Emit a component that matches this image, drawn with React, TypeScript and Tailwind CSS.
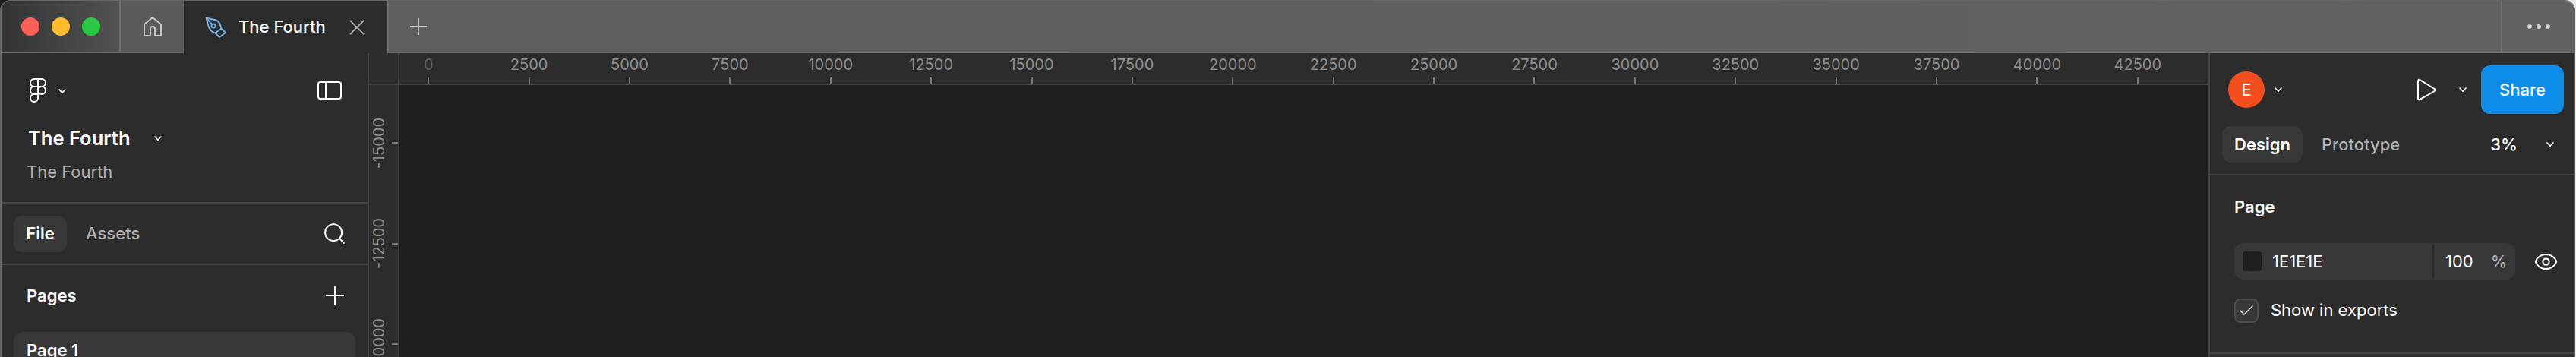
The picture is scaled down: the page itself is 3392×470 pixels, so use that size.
import { Eye, Check, Search } from "lucide-react";

const FONT = "font-['Inter','Liberation_Sans',sans-serif]";

const hLabels = [
  "0", "2500", "5000", "7500", "10000", "12500", "15000", "17500", "20000",
  "22500", "25000", "27500", "30000", "32500", "35000", "37500", "40000", "42500",
];
const vLabels = ["-15000", "-12500", "-10000"];

const Chevron = ({ className = "" }: { className?: string }) => (
  <svg width="12" height="8" viewBox="0 0 12 8" fill="none" className={className}>
    <path d="M1.5 1.5 6 6l4.5-4.5" stroke="white" strokeWidth="1.6" />
  </svg>
);

const Cross = ({ size, color, rotate = false }: { size: number; color: string; rotate?: boolean }) => (
  <svg width={size} height={size} viewBox="0 0 24 24" fill="none" stroke={color} strokeWidth="2">
    {rotate ? <path d="M1 1l22 22M23 1 1 23" /> : <path d="M12 0v24M0 12h24" />}
  </svg>
);

const FigmaLogo = () => (
  <svg width="22" height="32" viewBox="0 0 22 32" fill="none" stroke="white" strokeWidth="2">
    <path d="M11 1H6a5 5 0 0 0 0 10h5V1Z" />
    <path d="M11 1h5a5 5 0 0 1 0 10h-5V1Z" />
    <path d="M11 11H6a5 5 0 0 0 0 10h5V11Z" />
    <circle cx="16" cy="16" r="5" />
    <path d="M11 21H6a5 5 0 1 0 5 5v-5Z" />
  </svg>
);

const PenTool = () => (
  <svg width="28" height="28" viewBox="0 0 28 28" fill="none" stroke="#6eb1e0" strokeWidth="2" strokeLinejoin="round">
    <path d="M1.5 1.5 14.5 4.5Q19.5 6.5 21.5 15.5L13.5 21.5Q6.5 19.5 4.5 12.5Z" />
    <path d="M1.5 1.5 9 10" />
    <circle cx="11" cy="12" r="2.5" />
    <path d="M21.5 15.5 27 21 19 27 13.5 21.5" />
  </svg>
);

const HomeIcon = () => (
  <svg width="24" height="26" viewBox="0 0 24 26" fill="none" stroke="#c8c8c8" strokeWidth="2" strokeLinejoin="round">
    <path d="M1 25V10L12 1l11 9v15h-8v-9a3 3 0 0 0-6 0v9Z" />
  </svg>
);

const HorizontalRuler = () => (
  <div className="flex h-[40px] flex-1 overflow-hidden">
    <div className="ml-[-28px] flex">
      {hLabels.map((label, index) => (
        <div key={label} className="flex w-[132.4px] shrink-0 flex-col items-center">
          <span
            className={`mt-[1px] text-[20px] leading-[28px] ${index === 0 ? "text-[#5f5f5f]" : "text-[#8c8c8c]"}`}
          >
            {label}
          </span>
          <span className="mt-[3px] h-[8px] w-[2px] bg-[#777777]" />
        </div>
      ))}
    </div>
  </div>
);

const VerticalRuler = () => (
  <div className="h-full w-[40px] shrink-0 overflow-hidden border-r-2 border-[#444444] bg-[#2c2c2c] pt-[10px]">
    {vLabels.map((label) => (
      <div key={label} className="flex h-[132.5px] items-center justify-end">
        <span className="rotate-180 text-[20px] leading-[24px] text-[#8c8c8c] [writing-mode:vertical-rl]">
          {label}
        </span>
        <span className="ml-[5px] h-[2px] w-[8px] bg-[#777777]" />
      </div>
    ))}
  </div>
);

const LeftPanel = () => (
  <aside className="flex w-[484px] shrink-0 flex-col border-r-2 border-[#444444] bg-[#2c2c2c]">
    <div className="flex h-[198px] shrink-0 flex-col border-b-2 border-[#444444]">
      <div className="flex items-center justify-between pl-[37px] pr-[34px] pt-[33px]">
        <div className="flex items-center gap-[15px]">
          <FigmaLogo />
          <Chevron className="mt-[2px]" />
        </div>
        <svg width="32" height="24" viewBox="0 0 32 24" fill="none" stroke="white" strokeWidth="2">
          <rect x="1" y="1" width="30" height="22" rx="3" />
          <path d="M11 1v22" />
        </svg>
      </div>
      <div className="ml-[35px] mt-[31px] flex items-center gap-[30px]">
        <span className="text-[25.5px] font-semibold leading-[32px] text-white">The Fourth</span>
        <Chevron />
      </div>
      <p className="ml-[33px] mt-[14px] text-[22px] leading-[28px] text-[#b0b0b0]">The Fourth</p>
    </div>
    <div className="flex h-[81px] shrink-0 items-center border-b-2 border-[#444444] pl-[16px] pr-[27px]">
      <span className="flex h-[48px] w-[70px] items-center justify-center rounded-[12px] bg-[#383838] text-[22px] font-semibold text-white">
        File
      </span>
      <span className="ml-[25px] text-[22px] font-medium text-[#b0b0b0]">Assets</span>
      <Search size={33} strokeWidth={1.4} color="white" className="ml-auto" />
    </div>
    <div className="flex h-[80px] shrink-0 items-center justify-between pl-[33px] pr-[31px]">
      <span className="text-[22px] font-semibold text-white">Pages</span>
      <Cross size={24} color="white" />
    </div>
    <div className="mx-[16px] mt-[8px] h-[48px] shrink-0 rounded-[12px] bg-[#383838] px-[17px] text-[22px] font-semibold leading-[48px] text-white">
      Page 1
    </div>
  </aside>
);

const RightPanel = () => (
  <aside className="flex w-[482px] shrink-0 flex-col border-l-2 border-[#444444] bg-[#2c2c2c]">
    <div className="flex h-[161px] shrink-0 flex-col border-b-2 border-[#444444]">
      <div className="flex items-center pl-[24px] pr-[14px] pt-[16px]">
        <span className="flex h-[48px] w-[48px] items-center justify-center rounded-full bg-[#f24e1e] text-[22px] text-white">
          E
        </span>
        <Chevron className="ml-[12px]" />
        <svg width="26" height="30" viewBox="0 0 26 30" fill="none" className="ml-[176px]">
          <path d="M2 3.5v23c0 1.5 1.4 2 2.6 1.3l19-10.8c1.3-.8 1.3-2.2 0-3L4.6 2.2C3.4 1.5 2 2 2 3.5Z" stroke="white" strokeWidth="2" />
        </svg>
        <Chevron className="ml-[29px]" />
        <span className="ml-[18px] flex h-[64px] w-[109px] items-center justify-center rounded-[12px] bg-[#0d8ce9] text-[22px] font-medium text-white">
          Share
        </span>
      </div>
      <div className="flex items-center pl-[16px] pt-[16px]">
        <span className="flex h-[48px] w-[106px] items-center justify-center rounded-[12px] bg-[#383838] text-[22px] font-semibold text-white">
          Design
        </span>
        <span className="ml-[25px] text-[22px] font-medium text-[#b0b0b0]">Prototype</span>
        <span className="ml-[119px] text-[22px] font-medium text-white">3%</span>
        <Chevron className="ml-[37px]" />
      </div>
    </div>
    <div className="flex h-[235px] shrink-0 flex-col border-b-2 border-[#444444] pl-[32px]">
      <p className="mt-[27px] text-[22px] font-semibold leading-[28px] text-white">Page</p>
      <div className="mt-[34px] flex items-center">
        <div className="flex h-[48px] w-[370px] items-center rounded-[12px] bg-[#383838] pl-[11px] text-[22px] text-white">
          <span className="h-[26px] w-[25px] rounded-[4px] bg-[#1e1e1e]" />
          <span className="ml-[14px] w-[211px]">1E1E1E</span>
          <span className="h-[46px] w-[2px] bg-[#2c2c2c]" />
          <span className="ml-[15px]">100</span>
          <span className="ml-[23px] text-[#b0b0b0]">%</span>
        </div>
        <Eye size={33} strokeWidth={1.5} color="white" className="ml-[24px]" />
      </div>
      <div className="mt-[24px] flex items-center">
        <span className="flex h-[32px] w-[32px] items-center justify-center rounded-[8px] border-2 border-[#4c4c4c] bg-[#383838]">
          <Check size={24} strokeWidth={1.4} color="white" />
        </span>
        <span className="ml-[16px] text-[22px] text-white">Show in exports</span>
      </div>
    </div>
  </aside>
);

export default function App() {
  return (
    <div className={`${FONT} h-[470px] w-[3392px] overflow-hidden bg-[linear-gradient(90deg,#1c1c1c_0%,#1c1c1c_90%,#e6e6e6_99%)]`}>
      <div className="mr-[1px] flex h-full flex-col overflow-hidden rounded-t-[14px] border-l-2 border-r border-t border-[#666666]">
        {/* tab bar */}
        <header className="flex h-[69px] shrink-0 items-stretch border-b-2 border-[#6e6e6e] bg-[linear-gradient(90deg,#333333_0%,#555555_5%,#5e5e5e_15%,#616161_100%)]">
          <div className="flex w-[157px] items-center gap-[16px] border-r-2 border-[#6e6e6e] pl-[26px]">
            <span className="h-[24px] w-[24px] rounded-full bg-[#ff5f57]" />
            <span className="h-[24px] w-[24px] rounded-full bg-[#febc2e]" />
            <span className="h-[24px] w-[24px] rounded-full bg-[#28c840]" />
          </div>
          <div className="flex w-[83px] items-center justify-center bg-[#5a5a5a]">
            <HomeIcon />
          </div>
          <div className="mb-[-2px] flex w-[268px] items-center bg-[#2c2c2c] pl-[28px]">
            <PenTool />
            <span className="ml-[16px] text-[22px] font-medium text-white">The Fourth</span>
            <span className="ml-[31px]">
              <Cross size={20} color="#b5b5b5" rotate />
            </span>
          </div>
          <div className="flex w-[80px] items-center justify-center border-l-2 border-[#6e6e6e]">
            <Cross size={22} color="#c8c8c8" />
          </div>
          <div className="ml-auto flex w-[97px] items-center justify-center gap-[6px] border-l-2 border-[#737373]">
            <span className="h-[6px] w-[6px] rounded-full bg-[#cfcfcf]" />
            <span className="h-[6px] w-[6px] rounded-full bg-[#cfcfcf]" />
            <span className="h-[6px] w-[6px] rounded-full bg-[#cfcfcf]" />
          </div>
        </header>
        {/* main */}
        <div className="flex min-h-0 flex-1 overflow-hidden">
          <LeftPanel />
          <div className="flex min-w-0 flex-1 flex-col">
            <div className="flex h-[42px] shrink-0 border-b-2 border-[#444444] bg-[#2c2c2c]">
              <div className="w-[40px] shrink-0 border-r-2 border-[#444444]" />
              <HorizontalRuler />
            </div>
            <div className="flex min-h-0 flex-1 bg-[#1e1e1e]">
              <VerticalRuler />
            </div>
          </div>
          <RightPanel />
        </div>
      </div>
    </div>
  );
}
